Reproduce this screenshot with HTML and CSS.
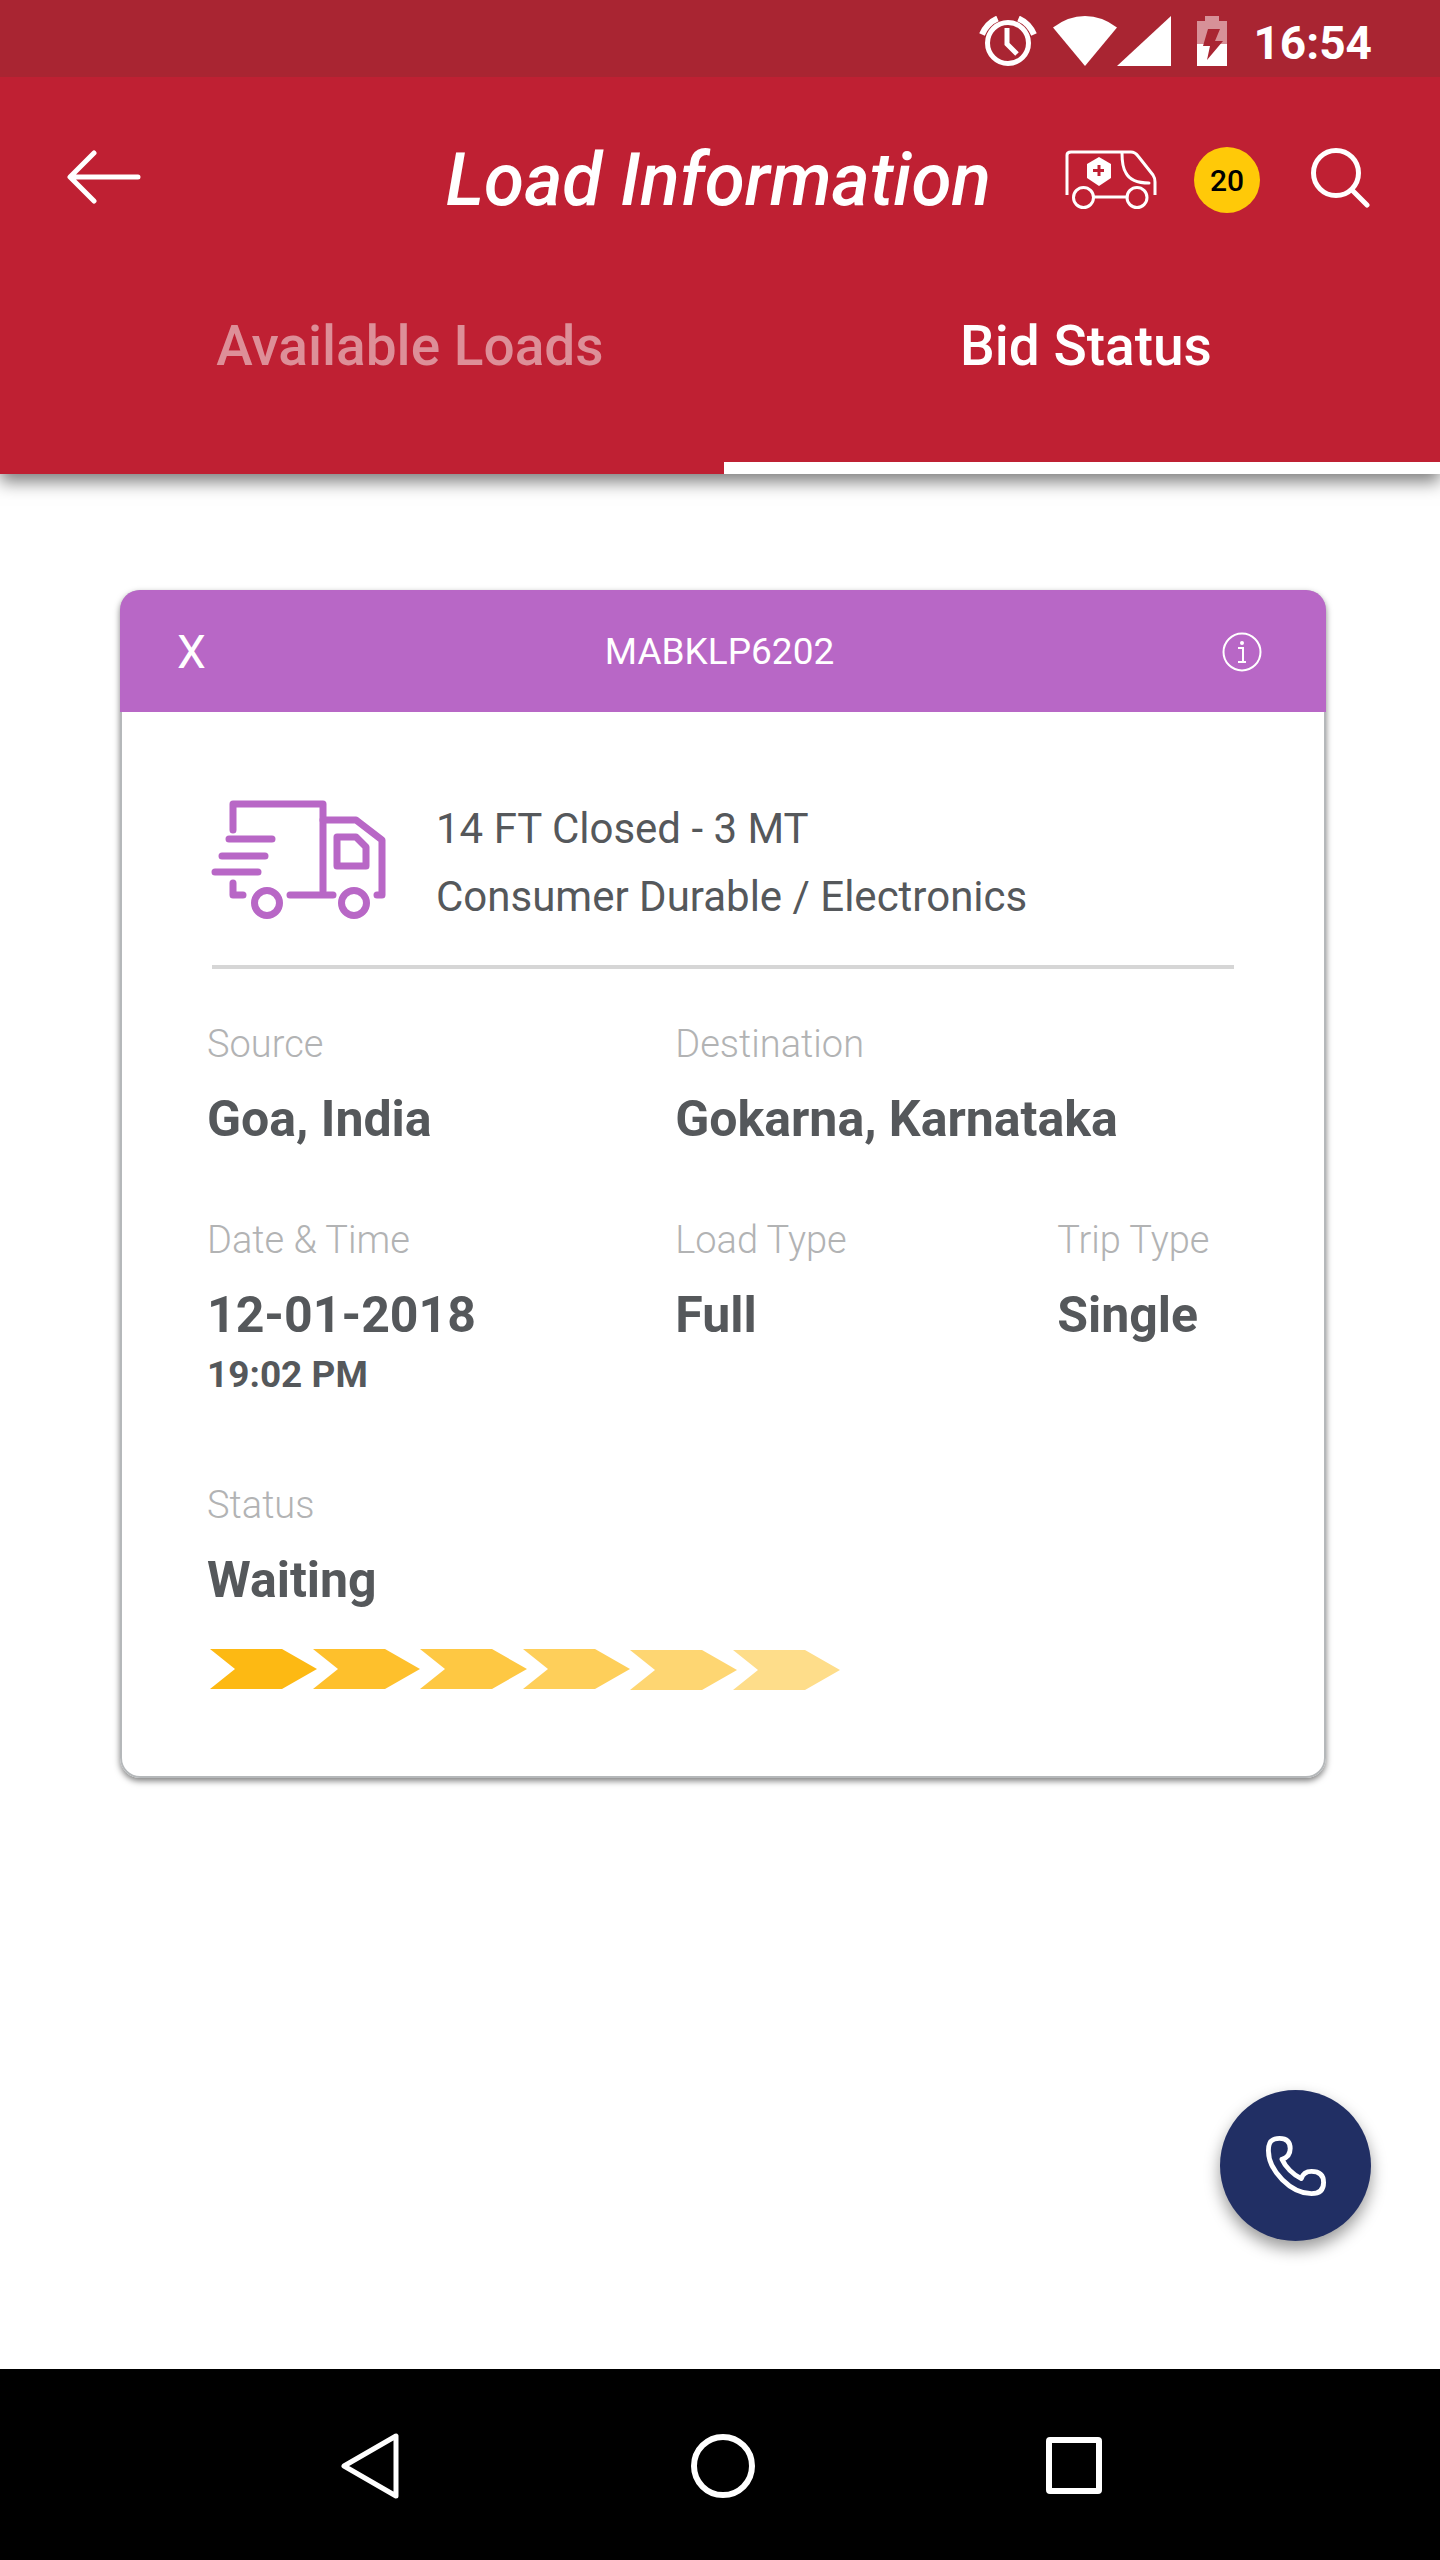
FILE: index.html
```html
<!DOCTYPE html>
<html lang="en">
<head>
<meta charset="utf-8">
<meta name="viewport" content="width=device-width, initial-scale=1">
<title>Load Information</title>
<link rel="stylesheet" href="styles.css">
</head>
<body>
<div class="app">
  <div class="statusbar">
    <svg class="status-icon status-alarm" width="58" height="50" viewBox="0 0 58 50" aria-hidden="true">
      <g fill="none" stroke="#fff">
        <circle cx="29" cy="27" r="20.500" stroke-width="5"/>
        <path d="M28 12V28L38 38" stroke-width="5"/>
        <path d="M3 18.500Q8 7 18.500 2.500M55 18.500Q50 7 39.500 2.500" stroke-width="6"/>
      </g>
    </svg>
    <svg class="status-icon" width="64" height="50" viewBox="0 0 64 50" aria-hidden="true"><path fill="#fff" d="M0 11.500Q15 0 32 0T64 11.500L32 50z"/></svg>
    <svg class="status-icon" width="54" height="50" viewBox="0 0 54 50" aria-hidden="true"><path fill="#fff" d="M54 0V50H0z"/></svg>
    <svg class="status-icon status-battery" width="30" height="50" viewBox="0 0 30 50" aria-hidden="true">
      <path fill="#d79198" d="M8 0H22V5H30V28H0V5H8z"/>
      <path fill="#fff" d="M0 28H30V50H0z"/>
      <path fill="#a92532" d="M11 13H23L18 25H26L10 44L13 30H6z"/>
    </svg>
    <span class="clock">16:54</span>
  </div>

  <header class="header">
    <div class="topbar">
      <button class="icon-button" type="button" aria-label="Back">
        <svg width="74" height="60" viewBox="0 0 74 60"><path d="M27 3L3 27L27 51M4 27H71" fill="none" stroke="#fff" stroke-width="5" stroke-linecap="round" stroke-linejoin="round"/></svg>
      </button>
      <h1 class="title">Load Information</h1>
      <button class="icon-button" type="button" aria-label="Vehicles">
        <svg width="92" height="60" viewBox="0 0 92 60">
          <g fill="none" stroke="#fff" stroke-width="3" stroke-linecap="round" stroke-linejoin="round">
            <path d="M2 45V5Q2 2 6 2H66Q70 2 73 6L88 25Q90 28 90 32V45" stroke-linecap="butt"/>
            <path d="M57 3Q57 17 61 23Q66 33 84 33"/>
            <circle cx="18.500" cy="47.500" r="10"/>
            <circle cx="72" cy="47.500" r="10"/>
            <path d="M29 47H62"/>
          </g>
          <path d="M34 7L46 14V28L34 36L22 28V14z" fill="#fff"/>
          <path d="M34 15V26M28 20.500H39" stroke="#bf2033" stroke-width="3"/>
        </svg>
      </button>
      <span class="badge">20</span>
      <button class="icon-button" type="button" aria-label="Search">
        <svg width="59" height="64" viewBox="0 0 59 64"><circle cx="25" cy="25" r="22.500" fill="none" stroke="#fff" stroke-width="5"/><path d="M41 42L56 57" stroke="#fff" stroke-width="5" stroke-linecap="round"/></svg>
      </button>
    </div>
    <nav class="tabs">
      <a class="tab tab-available" href="#available">Available Loads</a>
      <a class="tab tab-active" href="#bids" aria-current="page">Bid Status</a>
    </nav>
  </header>

  <main class="content">
    <article class="card">
      <div class="card-head">
        <button class="card-close" type="button" aria-label="Close">X</button>
        <h2 class="card-id">MABKLP6202</h2>
        <button class="icon-button card-info" type="button" aria-label="Details">
          <svg width="40" height="40" viewBox="0 0 40 40"><circle cx="20" cy="20" r="18.500" fill="none" stroke="#fff" stroke-width="2"/><circle cx="20" cy="11" r="2" fill="#fff"/><path d="M16 16H21V29M16 30H24" fill="none" stroke="#fff" stroke-width="2"/></svg>
        </button>
      </div>
      <div class="card-body">
        <div class="vehicle">
          <svg class="truck" width="175" height="126" viewBox="0 0 175 126" aria-hidden="true">
            <g fill="none" stroke="#b867c6" stroke-width="7" stroke-linecap="round" stroke-linejoin="round">
              <path d="M22 30V4H112V91"/>
              <path d="M112 20H145L171 40V95H166"/>
              <path d="M126 37H145L155 47V66H126z"/>
              <path d="M18 39H61M11 56H54M4 72H47"/>
              <path d="M22 83V95H32M79 95H122"/>
              <circle cx="56" cy="103" r="12.500"/>
              <circle cx="143" cy="103" r="12.500"/>
            </g>
          </svg>
          <div class="vehicle-text">
            <div>14 FT Closed - 3 MT</div>
            <div>Consumer Durable / Electronics</div>
          </div>
        </div>
        <dl class="details">
          <div class="field"><dt>Source</dt><dd>Goa, India</dd></div>
          <div class="field field-wide"><dt>Destination</dt><dd>Gokarna, Karnataka</dd></div>
          <div class="field"><dt>Date &amp; Time</dt><dd>12-01-2018</dd><dd class="time">19:02 PM</dd></div>
          <div class="field"><dt>Load Type</dt><dd>Full</dd></div>
          <div class="field"><dt>Trip Type</dt><dd>Single</dd></div>
        </dl>
        <dl class="status">
          <div class="field"><dt>Status</dt><dd>Waiting</dd></div>
        </dl>
        <svg class="progress" width="630" height="41" viewBox="0 0 630 41" aria-hidden="true">
          <path fill="#fdb913" d="M0 0H72L107 20L72 40H0L25 20z"/>
          <path fill="#fec02c" d="M103 0H175L210 20L175 40H103L128 20z"/>
          <path fill="#fec843" d="M210 0H282L317 20L282 40H210L235 20z"/>
          <path fill="#fecf5a" d="M313 0H385L420 20L385 40H313L338 20z"/>
          <path fill="#fed672" d="M420 1H492L527 21L492 41H420L445 21z"/>
          <path fill="#fedd8a" d="M523 1H595L630 21L595 41H523L548 21z"/>
        </svg>
      </div>
    </article>
    <button class="call" type="button" aria-label="Call">
      <svg width="60" height="62" viewBox="0 0 62 62"><path d="M14 2.500C6 2.500 2.500 6 2.500 15C2.500 36 26 59.500 47 59.500C56 59.500 59.500 55 59.500 48C59.500 40 55 36.500 47 36.500C41 36.500 38 39 36.500 44C28 40 20 32 16.500 24C22 22.500 25 19 25 13C25 6 21 2.500 14 2.500z" fill="none" stroke="#fff" stroke-width="5" stroke-linejoin="round"/></svg>
    </button>
  </main>

  <nav class="system-nav" aria-label="System">
    <button class="icon-button" type="button" aria-label="Back">
      <svg width="60" height="68" viewBox="0 0 60 68"><path d="M56 4V64L4 34z" fill="none" stroke="#fff" stroke-width="5" stroke-linejoin="round"/></svg>
    </button>
    <button class="icon-button" type="button" aria-label="Home">
      <svg width="64" height="64" viewBox="0 0 64 64"><circle cx="32" cy="32" r="29" fill="none" stroke="#fff" stroke-width="6"/></svg>
    </button>
    <button class="icon-button" type="button" aria-label="Recent apps">
      <svg width="56" height="57" viewBox="0 0 56 57"><rect x="3" y="3" width="50" height="51" rx="1" fill="none" stroke="#fff" stroke-width="6"/></svg>
    </button>
  </nav>
</div>
</body>
</html>
```
FILE: styles.css
```css
* { box-sizing: border-box; }

body {
  margin: 0;
  background: #fff;
  color: #55585b;
  font-family: Roboto, "Liberation Sans", sans-serif;
}

h1, h2, dl, dd { margin: 0; }

button {
  padding: 0;
  border: 0;
  background: none;
  color: inherit;
  font: inherit;
  cursor: pointer;
}

svg { display: block; }

.app {
  display: flex;
  flex-direction: column;
  min-height: 100vh;
}

/* Device status bar */
.statusbar {
  position: relative;
  z-index: 1;
  display: flex;
  align-items: center;
  justify-content: flex-end;
  height: 77px;
  padding: 0 68px 0 0;
  background: #a92532;
  color: #fff;
}

.status-icon { margin-top: 5px; }
.status-alarm { margin-right: 16px; }
.status-battery { margin: 5px 26px 0; }

.clock {
  padding-top: 9px;
  font-size: 46px;
  line-height: 54px;
  font-weight: 700;
}

/* App header */
.header {
  position: relative;
  background: #bf2033;
  color: #fff;
  box-shadow: 0 8px 16px rgba(0, 0, 0, 0.5);
}

.topbar {
  display: flex;
  align-items: center;
  height: 206px;
  padding: 0 70px 0 67px;
}

.icon-button { flex: none; }

.title {
  margin: 0 74px 0 auto;
  font-size: 73px;
  line-height: 84px;
  font-weight: 500;
  font-style: italic;
}

.badge {
  display: flex;
  align-items: center;
  justify-content: center;
  width: 66px;
  height: 66px;
  margin: 0 51px 0 37px;
  border-radius: 50%;
  background: #ffc908;
  color: #000;
  font-size: 30px;
  font-weight: 500;
}

.tabs {
  display: grid;
  grid-template-columns: 1fr 1fr;
  gap: 8px;
}

.tab {
  padding: 31px 0 84px;
  border-bottom: 12px solid transparent;
  color: inherit;
  font-size: 55px;
  line-height: 64px;
  font-weight: 500;
  text-align: center;
  text-decoration: none;
}

.tab-available {
  padding-left: 104px;
  color: #dd8f98;
}

.tab-active {
  padding-left: 8px;
  border-bottom-color: #fff;
}

/* Bid card */
.content {
  position: relative;
  flex: 1;
  padding: 116px 114px 116px 120px;
}

.card {
  overflow: hidden;
  border-radius: 20px;
  background: #fff;
  box-shadow: 0 3px 6px rgba(0, 0, 0, 0.5), inset 0 0 0 2px #b5b8ba;
}

.card-head {
  display: grid;
  grid-template-columns: 1fr auto 1fr;
  align-items: center;
  height: 122px;
  padding: 2px 64px 0 57px;
  background: #b867c6;
  color: #fff;
}

.card-close {
  justify-self: start;
  font-size: 46px;
  line-height: 56px;
}

.card-id {
  font-size: 37px;
  line-height: 48px;
  font-weight: 400;
}

.card-info { justify-self: end; }

.card-body { padding: 83px 92px 88px 90px; }

.vehicle {
  display: flex;
  align-items: center;
  gap: 50px;
  margin-left: 2px;
  padding-bottom: 34px;
  border-bottom: 4px solid #d6d6d6;
}

.truck {
  flex: none;
  margin-left: -1px;
}

.vehicle-text {
  font-size: 42px;
  line-height: 68px;
}

.details {
  display: grid;
  grid-template-columns: 466fr 380fr 176fr;
  row-gap: 65px;
  margin: 51px 0 82px -3px;
}

.field-wide { grid-column: span 2; }

.status { margin-left: -3px; }

dt {
  margin-bottom: 19px;
  color: #b2b3b4;
  font-size: 38px;
  line-height: 48px;
  font-weight: 300;
}

dd {
  font-size: 50px;
  line-height: 64px;
  font-weight: 700;
  white-space: nowrap;
}

.time {
  padding-top: 4px;
  font-size: 37px;
  line-height: 48px;
}

.progress { margin-top: 37px; }

/* Floating call button */
.call {
  position: absolute;
  right: 69px;
  bottom: 128px;
  display: flex;
  align-items: center;
  justify-content: center;
  width: 151px;
  height: 151px;
  border-radius: 50%;
  background: #212f64;
  box-shadow: 0 8px 16px rgba(0, 0, 0, 0.4);
}

/* Device navigation bar */
.system-nav {
  display: flex;
  align-items: center;
  justify-content: space-between;
  height: 191px;
  padding: 2px 338px 0 340px;
  background: #000;
}
```
